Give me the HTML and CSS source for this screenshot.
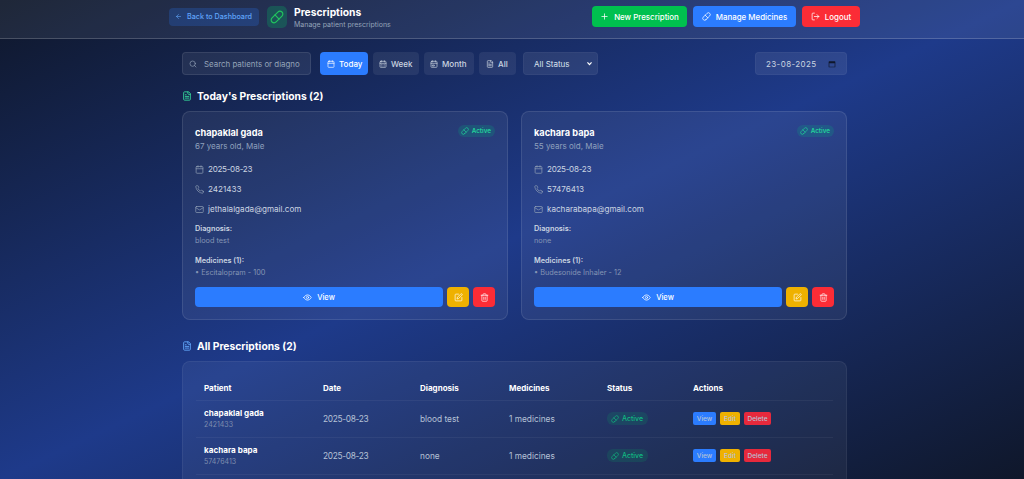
FILE: index.html
```html
<!DOCTYPE html>
<html lang="en">
<head>
  <meta charset="UTF-8">
  <meta name="viewport" content="width=device-width, initial-scale=1.0">
  <title>Prescriptions</title>
  <link rel="stylesheet" href="styles.css">
</head>
<body>
  <svg class="icon-defs" width="0" height="0">
    <defs>
      <symbol id="i-pill" viewBox="0 0 24 24"><path d="m10.5 20.5 10-10a4.95 4.95 0 1 0-7-7l-10 10a4.95 4.95 0 1 0 7 7Z"/><path d="m8.5 8.5 7 7"/></symbol>
      <symbol id="i-cal" viewBox="0 0 24 24"><path d="M8 2v4M16 2v4"/><rect x="3" y="4" width="18" height="18" rx="2"/><path d="M3 10h18"/></symbol>
      <symbol id="i-calw" viewBox="0 0 24 24"><path d="M8 2v4M16 2v4"/><rect x="3" y="4" width="18" height="18" rx="2"/><path d="M3 10h18M8 14h.01M12 14h.01M16 14h.01M8 18h.01M12 18h.01M16 18h.01"/></symbol>
      <symbol id="i-calm" viewBox="0 0 24 24"><path d="M8 2v4M16 2v4"/><rect x="3" y="4" width="18" height="18" rx="2"/><path d="M3 10h18M8 15h5v3H8z"/></symbol>
      <symbol id="i-file" viewBox="0 0 24 24"><path d="M15 2H6a2 2 0 0 0-2 2v16a2 2 0 0 0 2 2h12a2 2 0 0 0 2-2V7Z"/><path d="M14 2v4a2 2 0 0 0 2 2h4M16 13H8M16 17H8M10 9H8"/></symbol>
      <symbol id="i-phone" viewBox="0 0 24 24"><path d="M22 16.9v3a2 2 0 0 1-2.2 2 19.8 19.8 0 0 1-8.6-3.1 19.5 19.5 0 0 1-6-6 19.8 19.8 0 0 1-3.1-8.7A2 2 0 0 1 4.1 2h3a2 2 0 0 1 2 1.7c.1 1 .4 1.900.7 2.800a2 2 0 0 1-.5 2.100L8.100 9.900a16 16 0 0 0 6 6l1.300-1.300a2 2 0 0 1 2.100-.4c.9.3 1.800.6 2.800.7a2 2 0 0 1 1.700 2Z"/></symbol>
      <symbol id="i-mail" viewBox="0 0 24 24"><rect x="2" y="4" width="20" height="16" rx="2"/><path d="m22 7-8.970 5.700a1.940 1.940 0 0 1-2.060 0L2 7"/></symbol>
      <symbol id="i-eye" viewBox="0 0 24 24"><path d="M2 12s3.600-7 10-7 10 7 10 7-3.600 7-10 7-10-7-10-7Z"/><circle cx="12" cy="12" r="3"/></symbol>
      <symbol id="i-edit" viewBox="0 0 24 24"><path d="M12 3H5a2 2 0 0 0-2 2v14a2 2 0 0 0 2 2h14a2 2 0 0 0 2-2v-7"/><path d="M18.400 2.600a2.100 2.100 0 0 1 3 3L12 15l-4 1 1-4Z"/></symbol>
      <symbol id="i-trash" viewBox="0 0 24 24"><path d="M3 6h18M19 6v14a2 2 0 0 1-2 2H7a2 2 0 0 1-2-2V6M8 6V4a2 2 0 0 1 2-2h4a2 2 0 0 1 2 2v2M10 11v6M14 11v6"/></symbol>
    </defs>
  </svg>

  <header class="topbar">
    <div class="topbar-inner">
      <a class="back-btn">
        <svg class="icon" viewBox="0 0 24 24"><path d="m12 19-7-7 7-7M19 12H5"/></svg>
        Back to Dashboard
      </a>
      <div class="page-icon"><svg class="icon"><use href="#i-pill"/></svg></div>
      <div class="page-title">
        <h1>Prescriptions</h1>
        <p>Manage patient prescriptions</p>
      </div>
      <div class="top-actions">
        <a class="top-btn green">
          <svg class="icon" viewBox="0 0 24 24"><path d="M5 12h14M12 5v14"/></svg>
          New Prescription
        </a>
        <a class="top-btn blue"><svg class="icon"><use href="#i-pill"/></svg>Manage Medicines</a>
        <a class="top-btn red">
          <svg class="icon" viewBox="0 0 24 24"><path d="M9 21H5a2 2 0 0 1-2-2V5a2 2 0 0 1 2-2h4M16 17l5-5-5-5M21 12H9"/></svg>
          Logout
        </a>
      </div>
    </div>
  </header>

  <main class="content">
    <div class="toolbar">
      <div class="search">
        <svg class="icon" viewBox="0 0 24 24"><circle cx="11" cy="11" r="8"/><path d="m21 21-4.300-4.300"/></svg>
        <span class="search-text">Search patients or diagno</span>
      </div>
      <div class="filters">
        <a class="filter today active"><svg class="icon"><use href="#i-cal"/></svg>Today</a>
        <a class="filter week"><svg class="icon"><use href="#i-calw"/></svg>Week</a>
        <a class="filter month"><svg class="icon"><use href="#i-calm"/></svg>Month</a>
        <a class="filter all"><svg class="icon"><use href="#i-file"/></svg>All</a>
      </div>
      <div class="select">All Status
        <svg class="chev" viewBox="0 0 24 24"><path d="m5 8 7 8 7-8"/></svg>
      </div>
      <div class="date">23-08-2025
        <svg class="date-icon" viewBox="0 0 24 24"><path d="M4 4h16a2 2 0 0 1 2 2v14a2 2 0 0 1-2 2H4a2 2 0 0 1-2-2V6a2 2 0 0 1 2-2Zm0 6v10h16V10Z" fill-rule="evenodd"/></svg>
      </div>
    </div>

    <h2 class="section-title"><svg class="icon green-text"><use href="#i-file"/></svg>Today's Prescriptions (2)</h2>

    <div class="cards">
      <article class="card">
        <div class="card-head">
          <div>
            <h3>chapaklal gada</h3>
            <p class="age">67 years old, Male</p>
          </div>
          <span class="badge"><svg class="icon"><use href="#i-pill"/></svg>Active</span>
        </div>
        <div class="info"><svg class="icon"><use href="#i-cal"/></svg><span class="day">2025-08-23</span></div>
        <div class="info"><svg class="icon"><use href="#i-phone"/></svg>2421433</div>
        <div class="info"><svg class="icon"><use href="#i-mail"/></svg>jethalalgada@gmail.com</div>
        <div class="label first">Diagnosis:</div>
        <div class="value">blood test</div>
        <div class="label">Medicines (1):</div>
        <div class="value">• Escitalopram - 100</div>
        <div class="card-actions">
          <a class="view-btn"><svg class="icon"><use href="#i-eye"/></svg>View</a>
          <a class="square-btn yellow"><svg class="icon"><use href="#i-edit"/></svg></a>
          <a class="square-btn rose"><svg class="icon"><use href="#i-trash"/></svg></a>
        </div>
      </article>

      <article class="card">
        <div class="card-head">
          <div>
            <h3>kachara bapa</h3>
            <p class="age">55 years old, Male</p>
          </div>
          <span class="badge"><svg class="icon"><use href="#i-pill"/></svg>Active</span>
        </div>
        <div class="info"><svg class="icon"><use href="#i-cal"/></svg><span class="day">2025-08-23</span></div>
        <div class="info"><svg class="icon"><use href="#i-phone"/></svg>57476413</div>
        <div class="info"><svg class="icon"><use href="#i-mail"/></svg>kacharabapa@gmail.com</div>
        <div class="label first">Diagnosis:</div>
        <div class="value">none</div>
        <div class="label">Medicines (1):</div>
        <div class="value">• Budesonide Inhaler - 12</div>
        <div class="card-actions">
          <a class="view-btn"><svg class="icon"><use href="#i-eye"/></svg>View</a>
          <a class="square-btn yellow"><svg class="icon"><use href="#i-edit"/></svg></a>
          <a class="square-btn rose"><svg class="icon"><use href="#i-trash"/></svg></a>
        </div>
      </article>
    </div>

    <h2 class="section-title all-title"><svg class="icon blue-text"><use href="#i-file"/></svg>All Prescriptions (2)</h2>

    <div class="table-card">
      <table>
        <thead>
          <tr>
            <th class="col-patient">Patient</th>
            <th class="col-date">Date</th>
            <th class="col-diag">Diagnosis</th>
            <th class="col-med">Medicines</th>
            <th class="col-status">Status</th>
            <th>Actions</th>
          </tr>
        </thead>
        <tbody>
          <tr>
            <td><div class="pname">chapaklal gada</div><div class="pphone">2421433</div></td>
            <td><span class="day">2025-08-23</span></td>
            <td>blood test</td>
            <td>1 medicines</td>
            <td><span class="badge dim"><svg class="icon"><use href="#i-pill"/></svg>Active</span></td>
            <td><div class="row-actions"><a class="mini blue">View</a><a class="mini yellow">Edit</a><a class="mini rose">Delete</a></div></td>
          </tr>
          <tr>
            <td><div class="pname">kachara bapa</div><div class="pphone">57476413</div></td>
            <td><span class="day">2025-08-23</span></td>
            <td>none</td>
            <td>1 medicines</td>
            <td><span class="badge dim"><svg class="icon"><use href="#i-pill"/></svg>Active</span></td>
            <td><div class="row-actions"><a class="mini blue">View</a><a class="mini yellow">Edit</a><a class="mini rose">Delete</a></div></td>
          </tr>
        </tbody>
      </table>
    </div>
  </main>
</body>
</html>
```

FILE: styles.css
```css
* {
  box-sizing: border-box;
}

html, body {
  height: 479px;
  overflow: hidden;
}

body {
  margin: 0;
  font-family: Inter, "Noto Sans", sans-serif;
  color: #fff;
  background: linear-gradient(to bottom right, #0f172a 0%, #1e3a8a 50%, #0f172a 100%);
}

.icon-defs {
  position: absolute;
}

.icon {
  width: 9px;
  height: 9px;
  flex: none;
  fill: none;
  stroke: currentColor;
  stroke-width: 2;
  stroke-linecap: round;
  stroke-linejoin: round;
}

.topbar {
  height: 39px;
  background: rgba(255, 255, 255, 0.07);
  border-bottom: 1px solid rgba(255, 255, 255, 0.18);
}

.topbar-inner {
  display: flex;
  align-items: center;
  height: 33px;
  margin: 0 164px 0 169px;
}

.back-btn {
  display: flex;
  align-items: center;
  gap: 5px;
  width: 90px;
  height: 18px;
  padding-left: 6px;
  border-radius: 4px;
  background: rgba(43, 124, 255, 0.22);
  color: #60a5fa;
  font-size: 7.200px;
  font-weight: 500;
}

.back-btn .icon {
  width: 7px;
  height: 7px;
}

.page-icon {
  display: flex;
  align-items: center;
  justify-content: center;
  width: 20px;
  height: 22px;
  margin-left: 8px;
  border-radius: 5px;
  background: rgba(0, 190, 100, 0.25);
  color: #22c55e;
}

.page-icon .icon {
  width: 14px;
  height: 14px;
}

.page-title {
  margin-left: 7px;
  padding-top: 1px;
}

.page-title h1 {
  margin: 0;
  font-size: 10.300px;
  line-height: 13px;
  font-weight: 700;
}

.page-title p {
  margin: 1px 0 0;
  font-size: 7px;
  line-height: 9px;
  color: #94a3b8;
}

.top-actions {
  display: flex;
  gap: 6px;
  margin-left: auto;
}

.top-btn {
  display: flex;
  align-items: center;
  justify-content: center;
  gap: 5px;
  height: 21px;
  border-radius: 4px;
  font-size: 7.900px;
  font-weight: 500;
}

.top-btn.green { width: 95px; background: #00c04f; }
.top-btn.blue { width: 103px; background: #2b7cff; }
.top-btn.red { width: 58px; background: #fb2c36; }

.content {
  width: 665px;
  margin: 0 0 0 182px;
  padding-top: 13px;
}

.toolbar {
  display: flex;
  align-items: center;
  height: 23px;
}

.search {
  display: flex;
  align-items: center;
  gap: 7px;
  width: 129px;
  height: 23px;
  padding-left: 6px;
  border: 1px solid rgba(255, 255, 255, 0.09);
  border-radius: 4px;
  background: rgba(255, 255, 255, 0.07);
  color: #94a3b8;
  font-size: 7.900px;
  white-space: nowrap;
  overflow: hidden;
}

.search .icon {
  width: 8px;
  height: 8px;
}

.filters {
  display: flex;
  gap: 5px;
  margin-left: 9px;
}

.filter {
  display: flex;
  align-items: center;
  padding-left: 7px;
  gap: 4px;
  height: 23px;
  border-radius: 4px;
  background: rgba(255, 255, 255, 0.07);
  color: #cbd5e1;
  font-size: 8px;
  font-weight: 500;
}

.filter .icon {
  width: 8px;
  height: 8px;
}

.filter.today { width: 48px; }
.filter.week { width: 46px; padding-left: 6px; }
.filter.month { width: 50px; padding-left: 6px; }
.filter.all { width: 37px; padding-left: 7px; }

.filter.active {
  background: #2b7cff;
  color: #fff;
}

.select {
  display: flex;
  align-items: center;
  justify-content: space-between;
  width: 75px;
  height: 23px;
  margin-left: 7px;
  padding: 0 4px 0 10px;
  border-radius: 4px;
  border: 1px solid rgba(255, 255, 255, 0.04);
  background: rgba(255, 255, 255, 0.08);
  color: #dbe3ef;
  font-size: 8px;
}

.chev {
  width: 7px;
  height: 7px;
  fill: none;
  stroke: #fff;
  stroke-width: 4;
}

.date {
  display: flex;
  align-items: center;
  justify-content: space-between;
  width: 92px;
  height: 23px;
  margin-left: auto;
  padding: 0 10px 0 10px;
  border-radius: 4px;
  border: 1px solid rgba(255, 255, 255, 0.04);
  background: rgba(255, 255, 255, 0.08);
  color: #cbd5e1;
  font-size: 8px;
  letter-spacing: 0.4px;
}

.date-icon {
  width: 8px;
  height: 8px;
  fill: #0f172a;
}

.section-title {
  display: flex;
  align-items: center;
  gap: 5px;
  height: 14px;
  margin: 14px 0 8px;
  font-size: 10.300px;
  line-height: 14px;
  font-weight: 700;
}

.section-title.all-title {
  margin: 19px 0 8px;
}

.section-title .icon {
  width: 10px;
  height: 10px;
  stroke-width: 2.200;
}

.green-text { color: #34d399; }
.blue-text { color: #60a5fa; }

.cards {
  display: grid;
  grid-template-columns: 326px 326px;
  gap: 13px;
}

.card {
  height: 209px;
  padding: 13px 12px 0;
  border: 1px solid rgba(255, 255, 255, 0.1);
  border-radius: 8px;
  background: rgba(255, 255, 255, 0.06);
}

.card-head {
  display: flex;
  justify-content: space-between;
  align-items: flex-start;
  height: 32px;
  margin-bottom: 2px;
}

.card-head h3 {
  margin: 0;
  padding-top: 1px;
  font-size: 9.200px;
  line-height: 13px;
  font-weight: 700;
}

.age {
  margin: 2px 0 0;
  font-size: 8px;
  line-height: 11px;
  color: #8fa0bd;
}

.badge {
  display: inline-flex;
  align-items: center;
  gap: 3px;
  height: 12px;
  padding: 0 4px 0 3px;
  border-radius: 6px;
  background: rgba(0, 190, 130, 0.18);
  color: #22d39a;
  font-size: 6.300px;
  font-weight: 600;
}

.badge .icon {
  width: 8px;
  height: 8px;
}

.badge.dim {
  height: 13px;
  padding: 0 5px 0 4px;
  background: rgba(0, 190, 100, 0.14);
  color: #10b981;
  font-size: 7px;
  font-weight: 500;
}

.info {
  display: flex;
  align-items: center;
  gap: 4px;
  height: 20px;
  font-size: 8.100px;
  color: #cbd5e1;
}

.info .icon {
  width: 9px;
  height: 9px;
  stroke-width: 1.800;
  color: #94a3b8;
}

.day {
  letter-spacing: -0.3px;
}

.label {
  margin-top: 10px;
  font-size: 7.300px;
  line-height: 10px;
  font-weight: 600;
  color: #cbd5e1;
}

.label.first {
  margin-top: 5px;
}

.value {
  margin-top: 2px;
  font-size: 7.300px;
  line-height: 10px;
  color: #8494b4;
}

.card-actions {
  display: flex;
  gap: 4px;
  margin-top: 9px;
}

.view-btn {
  display: flex;
  align-items: center;
  justify-content: center;
  gap: 5px;
  flex: 1;
  height: 20px;
  border-radius: 4px;
  background: #2b7cff;
  font-size: 7.500px;
  font-weight: 500;
}

.square-btn {
  display: flex;
  align-items: center;
  justify-content: center;
  width: 22px;
  height: 20px;
  border-radius: 4px;
}

.square-btn .icon {
  stroke-width: 1.800;
}

.square-btn.yellow { background: #efb100; }
.square-btn.rose { background: #fb2c36; }

.table-card {
  height: 160px;
  padding: 14px 13px 0;
  border: 1px solid rgba(255, 255, 255, 0.06);
  border-radius: 8px;
  background: rgba(255, 255, 255, 0.05);
}

table {
  width: 100%;
  border-collapse: collapse;
  table-layout: fixed;
}

th {
  height: 24px;
  padding: 0 0 0 8px;
  text-align: left;
  font-size: 8px;
  font-weight: 700;
  border-bottom: 1px solid rgba(255, 255, 255, 0.05);
}

td {
  height: 37px;
  padding: 0 0 0 8px;
  font-size: 8.300px;
  color: #b6c2d6;
  border-bottom: 1px solid rgba(255, 255, 255, 0.05);
}

.col-patient { width: 119px; }
.col-date { width: 97px; }
.col-diag { width: 89px; }
.col-med { width: 98px; }
.col-status { width: 86px; }

.pname {
  padding-top: 1px;
  font-size: 8.100px;
  line-height: 11px;
  font-weight: 700;
  color: #fff;
}

.pphone {
  margin-top: 1px;
  font-size: 7px;
  line-height: 10px;
  color: #7f8eae;
}

.row-actions {
  display: flex;
  gap: 4px;
}

.mini {
  display: flex;
  align-items: center;
  justify-content: center;
  height: 13px;
  padding: 0 2px;
  border-radius: 2px;
  font-size: 6.500px;
  font-weight: 500;
}

.mini.blue { width: 23px; background: #2b7cff; }
.mini.yellow { width: 20px; background: #efb100; }
.mini.rose { width: 27px; background: #e7293c; }
```
